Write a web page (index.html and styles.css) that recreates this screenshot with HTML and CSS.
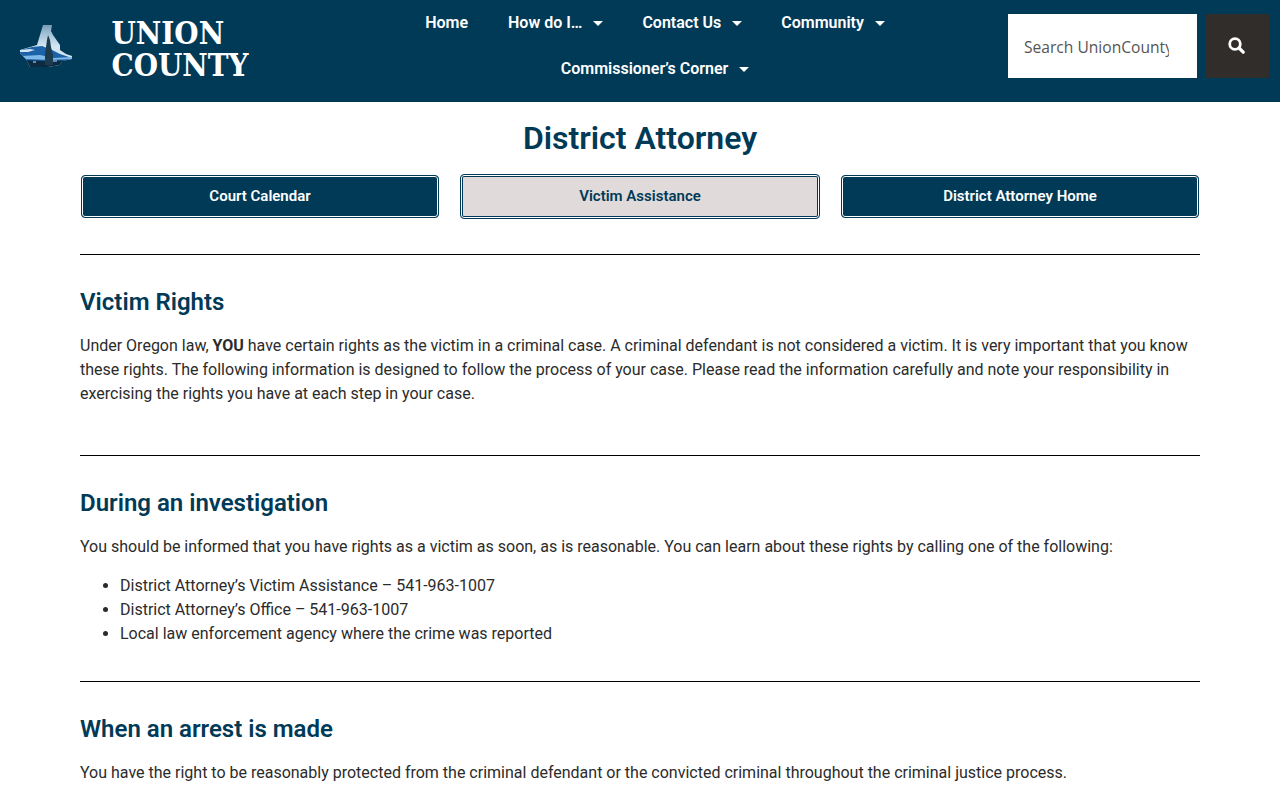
FILE: index.html
```html
<!DOCTYPE html>
<html lang="en">
<head>
<meta charset="utf-8">
<title>District Attorney – Union County</title>
<link rel="stylesheet" href="styles.css">
</head>
<body>
<header class="site-header">
  <a class="logo" href="#" aria-label="Union County home">
    <svg class="logo-mark" width="52" height="48" viewBox="0 0 52 48" aria-hidden="true">
      <defs>
        <linearGradient id="sky" x1="0" y1="0" x2="0" y2="1">
          <stop offset="0" stop-color="#6f93aa"/>
          <stop offset="0.2" stop-color="#9dbdd4"/>
          <stop offset="0.48" stop-color="#d3e5f2"/>
          <stop offset="1" stop-color="#d3e5f2"/>
        </linearGradient>
        <clipPath id="county">
          <path d="M23 2 32 2 31 8 33 12 40 22 40 27 46 31 52 33 52 36 42 38 40 42 28 44 10 44 6 36 0 30 0 27 17 22 20 12z"/>
        </clipPath>
        <filter id="soft" x="-5%" y="-5%" width="110%" height="110%">
          <feGaussianBlur stdDeviation="0.5"/>
        </filter>
      </defs>
      <g filter="url(#soft)">
        <g clip-path="url(#county)">
          <rect width="52" height="48" fill="url(#sky)"/>
          <path d="M0 27 12 24 22 23 32 27 40 31 52 35V40H0z" fill="#1f62a8"/>
          <path d="M0 27 10 26 15 27 8 29 0 29z" fill="#d3e5f2"/>
          <path d="M2 33 20 32 34 35 52 34V36L30 37 4 36z" fill="#7fb9e8"/>
          <path d="M0 37 30 38 52 37V48H0z" fill="#0b2c42"/>
          <path d="M13 38h3v2h-3zM33 37h4v2h-4z" fill="#5b8fb8"/>
          <path d="M28 12 30 17 31 24 33 32 33 42 25 42 25 32 26 24 27 17z" fill="#1a3a4e"/>
        </g>
      </g>
    </svg>
    <span class="logo-text">UNION<br>COUNTY</span>
  </a>
  <nav class="main-nav">
    <a href="#">Home</a>
    <a href="#">How do I… <i class="caret"></i></a>
    <a href="#">Contact Us <i class="caret"></i></a>
    <a href="#">Community <i class="caret"></i></a>
    <a href="#">Commissioner’s Corner <i class="caret"></i></a>
  </nav>
  <form class="search">
    <input class="search-input" type="text" placeholder="Search UnionCounty.org" aria-label="Search">
    <button class="search-btn" type="button" aria-label="Search">
      <svg class="search-icon" width="17" height="17" viewBox="0 0 17 17" aria-hidden="true">
        <circle cx="7" cy="7" r="5.3" fill="none" stroke="#fff" stroke-width="2.8"/>
        <path d="M11 11 15.2 15.2" stroke="#fff" stroke-width="3.2" stroke-linecap="round"/>
      </svg>
    </button>
  </form>
</header>

<main class="content">
  <h1 class="page-title">District Attorney</h1>
  <div class="tabs">
    <a class="tab" href="#">Court Calendar</a>
    <a class="tab tab-active" href="#">Victim Assistance</a>
    <a class="tab" href="#">District Attorney Home</a>
  </div>

  <section class="block block-first">
    <h2>Victim Rights</h2>
    <p>Under Oregon law, <strong>YOU</strong> have certain rights as the victim in a criminal case. A criminal defendant is not considered a victim. It is very important that you know these rights. The following information is designed to follow the process of your case. Please read the information carefully and note your responsibility in exercising the rights you have at each step in your case.</p>
  </section>

  <section class="block block-second">
    <h2>During an investigation</h2>
    <p>You should be informed that you have rights as a victim as soon, as is reasonable. You can learn about these rights by calling one of the following:</p>
    <ul>
      <li>District Attorney’s Victim Assistance – 541-963-1007</li>
      <li>District Attorney’s Office – 541-963-1007</li>
      <li>Local law enforcement agency where the crime was reported</li>
    </ul>
  </section>

  <section class="block">
    <h2>When an arrest is made</h2>
    <p>You have the right to be reasonably protected from the criminal defendant or the convicted criminal throughout the criminal justice process.</p>
  </section>
</main>
</body>
</html>
```
FILE: styles.css
```css
* { box-sizing: border-box; }
html, body { margin: 0; padding: 0; }
body {
  font-family: Roboto, "Liberation Sans", sans-serif;
  font-size: 16px;
  line-height: 24px;
  color: #2b2b2b;
  background: #fff;
  overflow: hidden;
  height: 800px;
}
a { text-decoration: none; }

.site-header {
  height: 102px;
  background: #003a57;
  display: flex;
  align-items: flex-start;
}
.logo {
  width: 371px;
  flex: none;
  display: flex;
  align-items: flex-start;
  padding: 23px 0 0 20px;
  color: #fff;
}
.logo-mark { flex: none; }
.logo-text {
  margin: -6px 0 0 39.5px;
  font-family: "DejaVu Serif Condensed", "DejaVu Serif", serif;
  font-weight: 700;
  font-size: 31px;
  line-height: 32px;
}
.main-nav {
  width: 567px;
  flex: none;
  display: flex;
  flex-wrap: wrap;
  justify-content: center;
  column-gap: 40px;
}
.main-nav a {
  color: #fff;
  font-weight: 600;
  font-size: 16px;
  line-height: 46px;
  white-space: nowrap;
}
.caret {
  display: inline-block;
  margin-left: 6px;
  vertical-align: 2px;
  width: 0;
  height: 0;
  border-left: 5px solid transparent;
  border-right: 5px solid transparent;
  border-top: 5px solid #fff;
  transform: translateX(1px);
}
.search {
  display: flex;
  gap: 8px;
  margin: 14px 0 0 70px;
}
.search-input {
  width: 189px;
  height: 64px;
  border: 0;
  border-radius: 0;
  background: #fff;
  padding: 2px 28px 0 16px;
  font-family: "Open Sans", sans-serif;
  font-size: 15.6px;
  color: #555;
  outline: none;
}
.search-input::placeholder { color: #555; opacity: 1; }
.search-btn {
  width: 64px;
  height: 64px;
  border: 0;
  padding: 0 1px 1px 0;
  background: #302d2b;
  display: flex;
  align-items: center;
  justify-content: center;
}

.content {
  width: 1120px;
  margin: 0 auto;
}
.page-title {
  margin: 0;
  padding-top: 16px;
  text-align: center;
  font-size: 32px;
  line-height: 40px;
  font-weight: 600;
  color: #003a57;
}
.tabs {
  display: grid;
  grid-template-columns: repeat(3, 1fr);
  column-gap: 22px;
  margin-top: 17px;
  padding: 0 1px 36px;
}
.tab {
  display: block;
  height: 43px;
  border: 1px solid #003a57;
  border-radius: 4px;
  background: #003a57;
  box-shadow: inset 0 0 0 1px #fff;
  color: #fff;
  font-weight: 600;
  font-size: 15px;
  line-height: 41px;
  text-align: center;
}
.tab-active {
  height: 45px;
  margin: -1px -1px;
  line-height: 43px;
  background: #e0dadb;
  box-shadow: inset 0 0 0 1px #fff, inset 0 0 0 2px #003a57;
  color: #003a57;
}
.block {
  border-top: 1px solid #000;
  padding-top: 29px;
  padding-bottom: 34px;
}
.block-second { padding-bottom: 35px; }
h2 {
  margin: 0 0 14.4px;
  font-size: 24px;
  line-height: 36px;
  font-weight: 600;
  color: #003a57;
}
.block p { margin: 0 0 14.4px; }
.block ul { margin: 0; padding-left: 40px; }
```
